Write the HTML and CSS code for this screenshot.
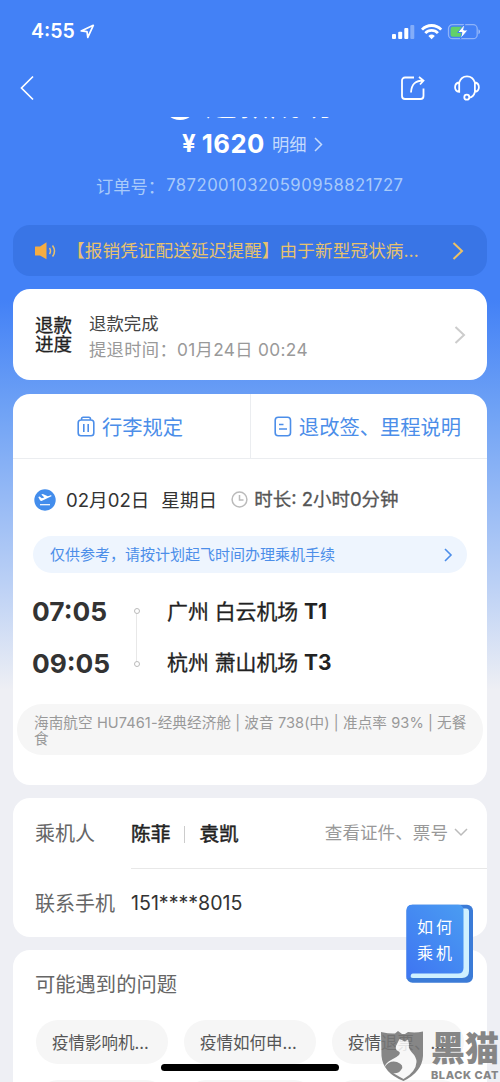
FILE: index.html
```html
<!DOCTYPE html>
<html lang="zh-CN">
<head>
<meta charset="utf-8">
<title>订单详情</title>
<link rel="stylesheet" href="styles.css">
</head>
<body>
<main class="screen">
  <div class="status">
    <span class="clock">4:55</span>
    <svg class="loc" width="15" height="15" viewBox="0 0 15 15"><path d="M1.2 6.900 13.300 1.300 7.800 13.400 7 7.600Z"/></svg>
    <svg class="signals" width="92" height="17" viewBox="0 0 92 17">
      <rect x="1" y="11" width="4" height="5" rx="1"/><rect x="7.200" y="8.700" width="4" height="7.300" rx="1"/><rect x="13.300" y="5" width="4" height="11" rx="1"/><rect x="19.300" y="2" width="4" height="14" rx="1" opacity=".35"/>
      <g class="wifi"><path d="M31 6.600a13.300 13.300 0 0 1 19.200 0"/><path d="M34.300 10.100a8.700 8.700 0 0 1 12.600 0"/></g><path d="M37.400 13a4.800 4.800 0 0 1 6.400 0l-3.200 3.300Z"/>
      <rect class="battery" x="57.500" y="1.700" width="28.700" height="14" rx="4"/><path d="M87.500 6.300c2 1 2 4 0 5Z" opacity=".5"/>
      <rect class="charge" x="59.600" y="3.700" width="13" height="10" rx="2"/><path class="bolt" d="m73.800 1-7.200 8.500h4.300L69.400 16l7.700-9h-4.400Z"/>
    </svg>
  </div>
  <nav class="nav">
    <svg class="back" width="16" height="26" viewBox="0 0 16 26"><path d="M13 1.500 1.500 13 13 24.500"/></svg>
    <svg class="share" width="26" height="26" viewBox="0 0 26 26"><path d="M14 2.500H5a3 3 0 0 0-3 3V21a3 3 0 0 0 3 3h15.500a3 3 0 0 0 3-3v-7.500M11 17.500C11.500 9 15 5.500 23.500 5.500M19 2l4.500 3.500L20 9.500"/></svg>
    <svg class="service" width="26" height="26" viewBox="0 0 26 26"><path d="M5.200 7.500C6.500 3.200 9.500 1.300 13 1.300s6.600 2 7.900 6.200M20.900 7.500v9.500c-1 3.600-3 5.400-5.600 5.600M5.200 7.500v9.300C-.3 16-.3 8.300 5.200 7.500ZM20.900 7.500c5.300.8 5.300 8.500 0 9.300"/><circle cx="12.800" cy="22.200" r="2.500"/></svg>
  </nav>
  <div class="scrolled"><i class="dot"></i><span>退款成功</span></div>
  <div class="amount"><b>¥</b><strong>1620</strong><span>明细</span><svg width="9" height="15" viewBox="0 0 9 15"><path d="m1 1 6.500 6.500L1 14"/></svg></div>
  <div class="order"><span>订单号：</span><span class="number">78720010320590958821727</span></div>

  <section class="notice">
    <svg class="horn" width="24" height="20" viewBox="0 0 24 20"><path class="horn-body" d="M1.500 5.500H6L12.500 1.200V18.300L6 14.500H1.500Q1 14.500 1 14V6Q1 5.500 1.500 5.500Z"/><path d="M15.500 7q2 3 0 6M18.500 4.500q4 5.500 0 11"/></svg>
    <span>【报销凭证配送延迟提醒】由于新型冠状病…</span>
    <svg class="arrow" width="12" height="18" viewBox="0 0 12 18"><path d="m1.500 1 8.500 8-8.500 8"/></svg>
  </section>

  <section class="card progress">
    <b class="medium">退款<br>进度</b>
    <div class="progress-text"><p class="done">退款完成</p><p class="when">提退时间：01月24日 00:24</p></div>
    <svg class="arrow" width="12" height="18" viewBox="0 0 12 18"><path d="m1.500 1 8.500 8-8.500 8"/></svg>
  </section>

  <section class="card flight">
    <div class="tabs">
      <div class="tab"><svg width="18" height="22" viewBox="0 0 18 22"><path d="M4.500 4.500V3q0-1.700 1.700-1.700h5.600Q13.500 1.300 13.500 3v1.500M4 4h10q2.800 0 2.800 2.800V17q0 2.800-2.800 2.800H4Q1.200 19.800 1.200 17V6.800Q1.200 4 4 4ZM6.800 8v8M11.200 8v8"/></svg><span class="bag-text">行李规定</span></div>
      <div class="tab"><svg width="18" height="22" viewBox="0 0 18 22"><rect x="1.200" y="1.200" width="15.300" height="18.500" rx="3"/><path d="M5 8.500h4.500M5 13h8"/></svg><span class="rule-text">退改签、里程说明</span></div>
    </div>
    <div class="date">
      <svg class="plane" width="22" height="22" viewBox="0 0 22 22"><circle cx="11" cy="11" r="10.700"/><path class="white" d="m4.300 8 1.300-.4 2.200 1.600 2.500-.8-3-3 1.500-.5 5 2.300 2.400-.8c1.300-.4 2 .6.700 1.200L8 11.800q-1.300.3-2-.6Z"/><path class="line" d="M6 15.700h10"/></svg>
      <span class="day">02月02日</span><span class="week">星期日</span>
      <svg class="time" width="17" height="17" viewBox="0 0 17 17"><circle cx="8.500" cy="8.500" r="7.400"/><path d="M8.500 4v5h4"/></svg>
      <span class="duration">时长: 2小时0分钟</span>
    </div>
    <div class="advice"><span>仅供参考，请按计划起飞时间办理乘机手续</span><svg width="9" height="14" viewBox="0 0 9 14"><path d="m1 1 6 6-6 6"/></svg></div>
    <div class="route">
      <div class="times"><span>07:05</span><span>09:05</span></div>
      <div class="track"><i></i><i></i></div>
      <div class="airports medium"><span>广州 白云机场 <b>T1</b></span><span>杭州 萧山机场 <b>T3</b></span></div>
    </div>
    <div class="detail">海南航空 HU7461-经典经济舱 | 波音 738(中) | 准点率 93% | 无餐<br>食</div>
  </section>

  <section class="card people">
    <div class="person"><span class="label">乘机人</span><div class="value"><b class="medium">陈菲</b><i></i><b class="medium">袁凯</b><span class="more">查看证件、票号</span><svg width="14" height="9" viewBox="0 0 14 9"><path d="m1 1 6 6 6-6"/></svg></div></div>
    <div class="phone"><span class="label">联系手机</span><span class="tel">151****8015</span></div>
  </section>

  <section class="card questions">
    <h2>可能遇到的问题</h2>
    <div class="chips"><span>疫情影响机…</span><span>疫情如何申…</span><span>疫情退票、…</span></div>
    <div class="chips"><span></span><span></span><span></span></div>
  </section>

  <div class="guide">
    <svg width="68" height="80" viewBox="0 0 68 80">
      <defs><linearGradient id="cover" x1="1" y1="0" x2=".2" y2="1"><stop stop-color="#4a9cf2"/><stop offset="1" stop-color="#3f78f2"/></linearGradient></defs>
      <rect x=".5" y=".8" width="66.500" height="78" rx="6" fill="#3b7bd7"/><path d="M57 4.500h3q3 0 3 3V67q0 7-7 7H7q-3 0-3-3t3-3H56Z" fill="#cff0ff"/><path d="M6 .8h46q5.500 0 5.500 5.500V64q0 5.500-5.500 5.500H7Q4.500 69.500 4.500 73.500L.5 75V6.500Q.5.800 6 .8Z" fill="url(#cover)"/>
    </svg>
    <p>如何<br>乘机</p>
  </div>

  <div class="watermark">
    <svg width="46" height="52" viewBox="0 0 46 52"><path d="M1 2q9 2 14 1.500L18 1l4 3h3l3-2q8 1 15-.5V26Q42 42 23.500 51 3 43 1.500 26Z"/><path class="cat" d="M19.500 9 16 16q-1 4 2 5 3 1 1 4-2 2-7 4.500Q5 33 4.500 37.500 9 30 17 32q8 3 4 8-3 4-8 3 5 3 10.500 6Q36 42 36.500 32q0-5-5-10-3.500-4-2.500-8l-1-4.500-3 2Z"/></svg>
    <div class="brand"><span class="brand-cn">黑猫</span><span class="brand-en">BLACK CAT</span></div>
  </div>
  <div class="home"></div>
</main>
</body>
</html>
```
FILE: styles.css
```css
* { box-sizing: border-box; }
body { margin: 0; font-family: Inter, "Noto Sans CJK SC", sans-serif; }
p, h2 { margin: 0; font-weight: 400; }
svg { display: block; flex: none; fill: none; stroke: currentColor; }
span, b, strong { white-space: nowrap; }
.screen { position: relative; width: 500px; height: 1082px; overflow: hidden; color: #333; background: linear-gradient(#4381f6 300px, #6fa2f5 410px, #bed2f5 590px, #eeeff4 690px); }
.screen .medium { font-weight: 400; -webkit-text-stroke: .3px currentColor; }
.status { height: 60px; display: flex; align-items: center; padding: 2px 18px 0 31px; color: #fff; }
.clock { font-size: 19.500px; font-weight: 600; }
.loc { margin-left: 5px; stroke-width: 1.7; stroke-linejoin: round; }
.signals { margin-left: auto; margin-right: -1px; fill: #fff; stroke: none; }
.wifi { fill: none; stroke: #fff; stroke-width: 2.8; }
.battery { fill: none; stroke: rgba(255,255,255,.4); stroke-width: 1.3; }
.charge { fill: #62d169; }
.bolt { stroke: #4381f6; stroke-width: 1; }
.nav { height: 56px; display: flex; align-items: center; padding: 0 20px 1px; color: #fff; }
.back { stroke-width: 1.7; }
.share { margin-left: auto; margin-right: 28px; stroke-width: 1.8; }
.service { stroke-width: 1.8; }
.share, .service { margin-top: 1px; }
.scrolled { height: 4px; margin-top: 1px; overflow: hidden; display: flex; align-items: flex-end; padding-left: 163px; color: #fff; }
.dot { width: 34px; height: 34px; flex: none; border-radius: 50%; background: #fff; margin-right: 8px; margin-bottom: 1px; }
.scrolled span { font-size: 32px; line-height: 32px; font-weight: 700; margin-bottom: 1px; }
.amount { height: 46px; display: flex; align-items: center; padding: 0 0 2px 182px; color: #fff; }
.amount b { font-size: 24px; margin-right: 6px; }
.amount strong { font-size: 25.700px; letter-spacing: .5px; }
.amount span { font-size: 17.300px; margin: 0 0 0 7px; color: #c4dafc; }
.amount svg { margin: 2px 0 0 7px; color: #c4dafc; stroke-width: 1.5; }
.order { height: 38px; display: flex; align-items: center; padding: 0 0 2px 96px; color: #a8cafa; font-size: 17.300px; }
.order .number { font-size: 16.700px; margin-left: 1px; letter-spacing: .46px; }
.notice { margin: 20px 13px 13px; height: 51px; border-radius: 17px; background: #3975e6; display: flex; align-items: center; padding: 0 23px 0 21px; color: #e7c26e; }
.notice span { font-size: 17.600px; margin-left: 9px; margin-top: -2px; letter-spacing: .12px; }
.horn { stroke-width: 1.5; }
.horn-body { fill: #f5ac42; stroke: none; }
.notice .arrow { margin-left: auto; stroke-width: 2; color: #edc164; }
.card { margin: 0 13px 13px; background: #fff; border-radius: 17px; }
.progress { height: 91px; display: flex; align-items: center; padding: 0 21px 0 22px; margin-bottom: 14px; }
.progress b { font-size: 18.500px; line-height: 19px; color: #222; }
.progress-text { margin: 4px 0 0 17px; }
.done { font-size: 17.400px; line-height: 26px; color: #444; }
.when { font-size: 17.300px; line-height: 26px; color: #999; letter-spacing: .32px; }
.progress .arrow { margin-left: auto; stroke-width: 2; color: #ccc; }
.flight { height: 391px; }
.tabs { display: flex; height: 65px; border-bottom: 1px solid #ebedf0; color: #4c8ee9; }
.tab { width: 50%; display: flex; align-items: center; justify-content: center; gap: 7px; font-size: 20.300px; padding: 1px 3px 0 0; }
.tab + .tab { border-left: 1px solid #ebedf0; }
.tab span { margin-top: -2px; }
.tab svg { stroke-width: 1.6; }
.date { height: 77px; display: flex; align-items: center; padding: 4px 0 0 21px; font-size: 18.600px; }
.date span { margin-top: -3px; }
.plane { fill: #438dec; stroke: none; margin-right: 10px; }
.plane .white { fill: #fff; }
.plane .line { stroke: #fff; stroke-width: 1.2; }
.date .week { margin-left: 12px; }
.time { margin: 0 6px 0 14px; color: #bbb; stroke-width: 1.5; }
.duration { -webkit-text-stroke: .3px currentColor; font-size: 18.500px; color: #555; }
.advice { height: 37px; margin: 0 20px; border-radius: 19px; background: #eef5fe; display: flex; align-items: center; justify-content: space-between; padding: 0 14px 2px 17px; color: #4c8ee9; font-size: 15px; }
.advice svg { stroke-width: 1.6; margin-top: 2px; }
.route { display: flex; margin-top: 13px; height: 103px; padding-left: 19px; }
.times, .airports { display: flex; flex-direction: column; }
.times { width: 102px; font-size: 26.300px; line-height: 52px; font-weight: 700; }
.airports { font-size: 20.900px; line-height: 51px; margin-left: 28px; color: #222; }
.airports b { font-weight: 700; -webkit-text-stroke: 0; }
.track { width: 5px; margin: 22px 0; display: flex; flex-direction: column; align-items: center; justify-content: space-between; background: linear-gradient(#e8e8e8,#e8e8e8) center / 1px 100% no-repeat; }
.track i { width: 6px; height: 6px; flex: none; border: 1px solid #bbb; border-radius: 50%; background: #fff; }
.detail { margin: 15px 4px 0; height: 51px; border-radius: 25px; background: #f6f6f6; padding: 11px 0 0 17px; font-size: 14.600px; line-height: 16px; letter-spacing: .08px; color: #999; white-space: nowrap; }
.people { height: 139px; padding-left: 22px; }
.label { width: 96px; flex: none; font-size: 20px; color: #666; margin-top: -2px; }
.person, .phone { display: flex; align-items: center; height: 70px; }
.phone { height: 69px; }
.phone .label { margin-top: 0; }
.value { height: 71px; flex: 1; display: flex; align-items: center; border-bottom: 1px solid #e8e8e8; padding-right: 19px; font-size: 19.700px; }
.screen .value b { color: #222; -webkit-text-stroke-width: .5px; }
.value i { height: 17px; width: 1px; margin: 3px 14px 0; background: #ccc; }
.more { margin-left: auto; margin-right: 6px; margin-top: -2px; font-size: 17.600px; color: #999; }
.value svg { color: #bbb; stroke-width: 1.5; }
.tel { font-size: 19.600px; }
.questions { height: 160px; padding: 21px 0 0 22px; }
.questions h2 { height: 49px; font-size: 20.300px; line-height: 28px; color: #666; }
.chips { display: flex; gap: 16px; margin: 0 0 16px 1px; }
.chips span { width: 132px; height: 44px; flex: none; border-radius: 22px; background: #f6f6f6; display: flex; align-items: center; padding: 0 0 1px 16px; font-size: 16.500px; color: #555; }
.guide { position: absolute; left: 406px; top: 904px; width: 68px; height: 80px; }
.guide svg { stroke: none; }
.guide p { position: absolute; left: 11px; top: 10px; color: #fff; font-size: 16px; line-height: 26px; letter-spacing: 3px; }
.watermark { position: absolute; left: 380px; top: 1030px; display: flex; color: #777; opacity: .88; }
.watermark svg { fill: #777; stroke: none; }
.watermark .cat { fill: #f8f8f8; }
.brand { display: flex; flex-direction: column; margin-left: 5px; }
.brand-cn { font-size: 34px; line-height: 37px; font-weight: 900; height: 38px; }
.brand-en { font-size: 11px; line-height: 14px; font-weight: 800; letter-spacing: .55px; }
.home { position: absolute; left: 161px; top: 1064px; width: 178px; height: 7px; border-radius: 4px; background: #000; }
```
